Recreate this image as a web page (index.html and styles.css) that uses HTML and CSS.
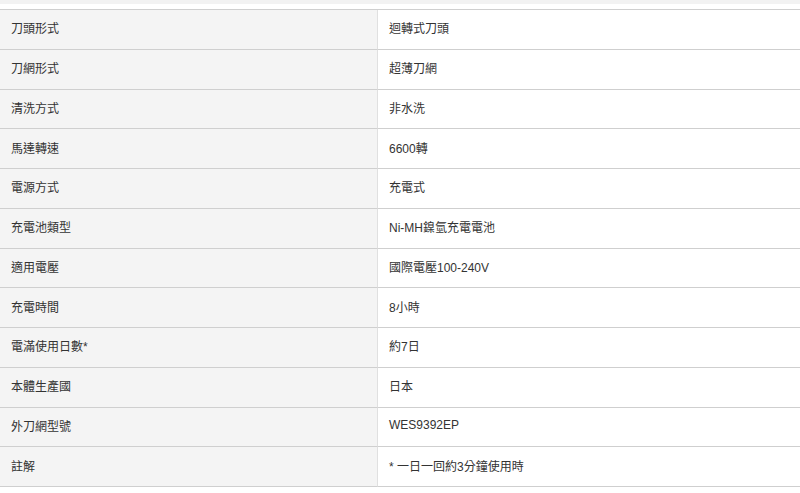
FILE: index.html
```html
<!DOCTYPE html>
<html lang="zh-Hant">
<head>
<meta charset="utf-8">
<link rel="stylesheet" href="styles.css">
</head>
<body>
<div class="topband"></div>
<div class="spec">
  <div class="k">刀頭形式</div><div class="v">迴轉式刀頭</div>
  <div class="k">刀網形式</div><div class="v">超薄刀網</div>
  <div class="k">清洗方式</div><div class="v">非水洗</div>
  <div class="k">馬達轉速</div><div class="v">6600轉</div>
  <div class="k">電源方式</div><div class="v">充電式</div>
  <div class="k">充電池類型</div><div class="v">Ni-MH鎳氫充電電池</div>
  <div class="k">適用電壓</div><div class="v">國際電壓100-240V</div>
  <div class="k">充電時間</div><div class="v">8小時</div>
  <div class="k">電滿使用日數*</div><div class="v">約7日</div>
  <div class="k">本體生產國</div><div class="v">日本</div>
  <div class="k">外刀網型號</div><div class="v">WES9392EP</div>
  <div class="k">註解</div><div class="v">* 一日一回約3分鐘使用時</div>
</div>
</body>
</html>
```
FILE: styles.css
```css
html, body {
  margin: 0;
  padding: 0;
  background: #ffffff;
}
body {
  font-family: "Liberation Sans", "Noto Sans CJK TC", sans-serif;
  font-size: 12px;
  color: #333333;
}
.topband {
  height: 4px;
  background: #f2f2f2;
  margin-bottom: 5px;
}
.spec {
  display: grid;
  grid-template-columns: 378px 1fr;
  grid-auto-rows: 39.75px;
  border-top: 1px solid #cfcfcf;
}
.k, .v {
  display: flex;
  align-items: center;
  border-bottom: 1px solid #cfcfcf;
  padding-left: 11px;
  padding-bottom: 3px;
  box-sizing: border-box;
}
.k {
  background: #f4f4f4;
  border-right: 1px solid #e0e0e0;
}
.v {
  background: #ffffff;
}
```
